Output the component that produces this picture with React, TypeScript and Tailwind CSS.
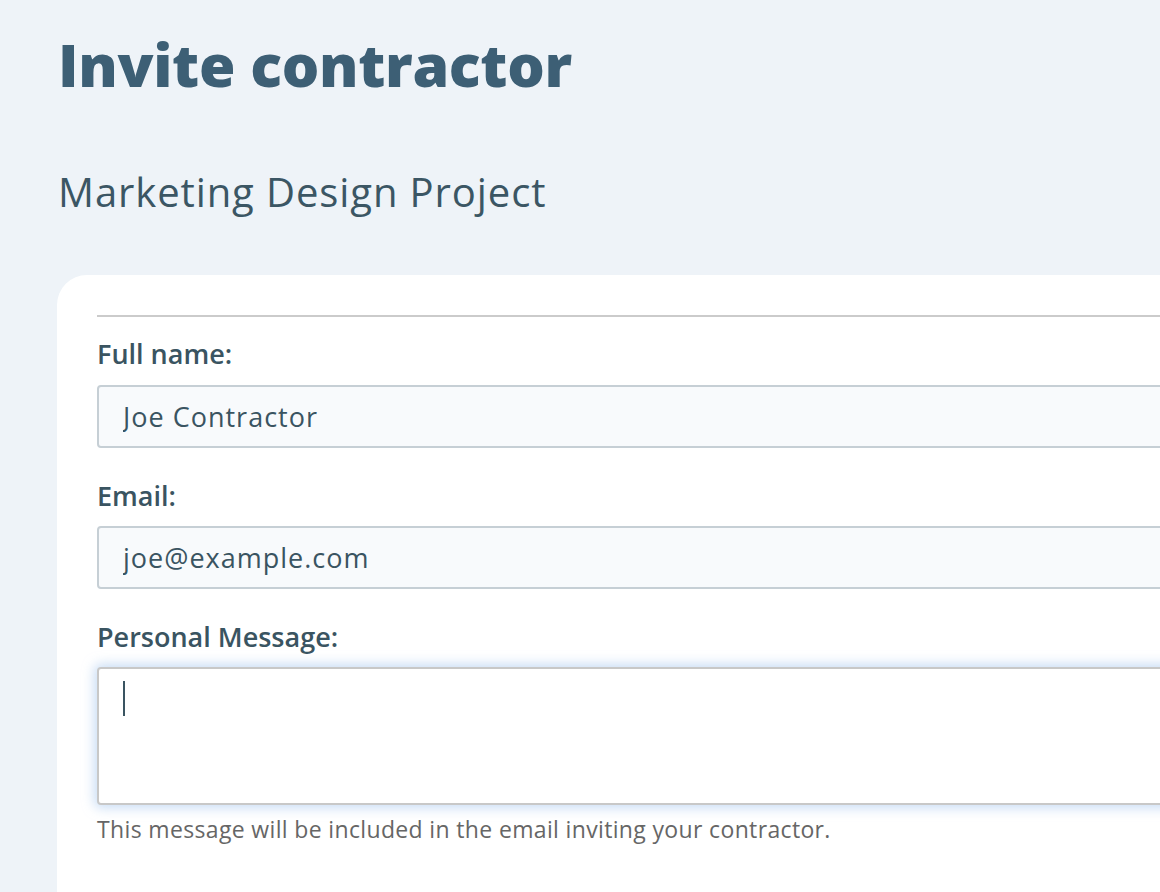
import React from 'react';

export default function App() {
    return (
        <div className="h-screen overflow-hidden bg-[#eef3f8] font-['Open_Sans',sans-serif]">
            {/* Header */}
            <div className="pl-[58px] pt-[28px]">
                <h1 className="text-[59px] leading-[72px] font-extrabold text-[#3d5f75] tracking-[-0.3px]">Invite contractor</h1>
                <h2 className="mt-[70px] text-[40px] leading-[44px] font-normal text-[#3b5664] tracking-[0.9px]">Marketing Design Project</h2>
            </div>

            {/* Form card */}
            <div className="mt-[61px] ml-[57px] w-[1300px] rounded-t-[30px] bg-white px-[40px] pt-[40px] pb-[80px]">
                <div className="border-t-2 border-[#cbcbcb]"></div>

                <div className="mt-[21px]">
                    <label className="block text-[27px] leading-[32px] font-semibold text-[#3a5461]">Full name:</label>
                    <input
                        type="text"
                        defaultValue="Joe Contractor"
                        className="mt-[15px] block w-full h-[63px] px-[24px] rounded-[4px] border-2 border-[#c6cfd5] bg-[#f8fafc] text-[27px] tracking-[1px] text-[#3a5461] outline-none"
                    />
                </div>

                <div className="mt-[32px]">
                    <label className="block text-[27px] leading-[32px] font-semibold text-[#3a5461]">Email:</label>
                    <input
                        type="email"
                        defaultValue="joe@example.com"
                        className="mt-[14px] block w-full h-[63px] px-[24px] rounded-[4px] border-2 border-[#c6cfd5] bg-[#f8fafc] text-[27px] tracking-[1px] text-[#3a5461] outline-none"
                    />
                </div>

                <div className="mt-[32px]">
                    <label className="block text-[27px] leading-[32px] font-semibold text-[#3a5461]">Personal Message:</label>
                    <div className="mt-[14px] relative h-[138px] rounded-[4px] border-2 border-[#c8c8c8] bg-white shadow-[0_0_12px_3px_rgba(165,198,238,0.6)]">
                        {/* caret */}
                        <span className="absolute left-[24px] top-[12px] w-[2px] h-[35px] bg-[#3a5461]"></span>
                    </div>
                    <p className="mt-[10px] text-[23px] leading-[28px] tracking-[0.35px] text-[#666666]">This message will be included in the email inviting your contractor.</p>
                </div>
            </div>
        </div>
    );
}
